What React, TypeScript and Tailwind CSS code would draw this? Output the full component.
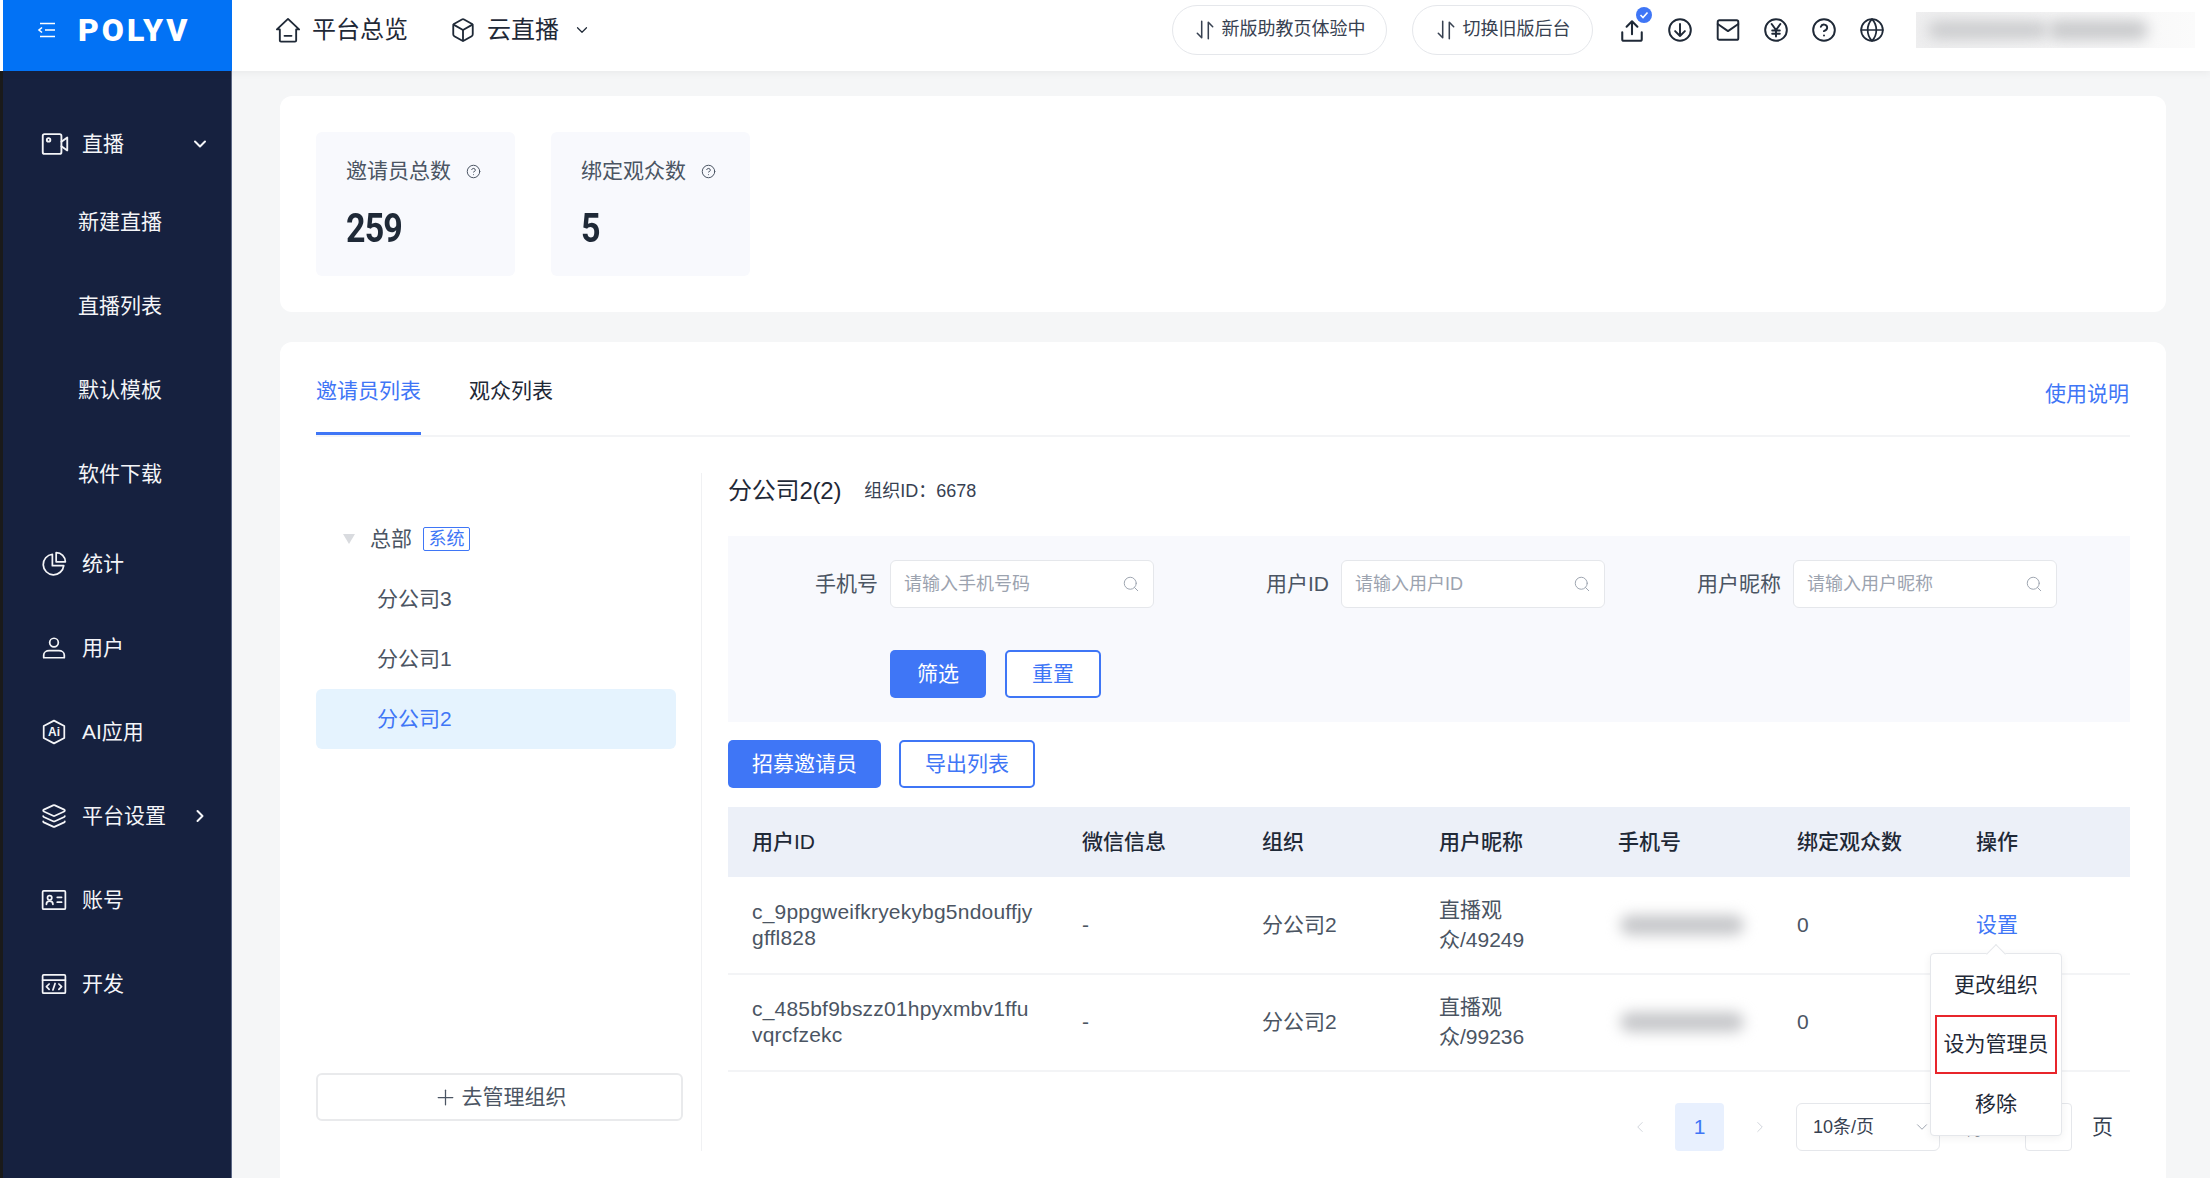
import { ChevronDown, ChevronLeft, ChevronRight, Search, Plus, Box, CircleHelp, Globe, Layers } from 'lucide-react'
import type { ReactNode } from 'react'

const Ic = ({ children, size = 26, sw = 1.6, className = '' }: { children: ReactNode; size?: number; sw?: number; className?: string }) => (
  <svg width={size} height={size} viewBox="0 0 24 24" fill="none" stroke="currentColor" strokeWidth={sw} strokeLinecap="round" strokeLinejoin="round" className={className}>
    {children}
  </svg>
)

const SwapIcon = () => (
  <svg width="22" height="22" viewBox="0 0 20 20" fill="none" stroke="currentColor" strokeWidth="1.4" strokeLinecap="round" strokeLinejoin="round">
    <path d="M7 2v15l-4-4" />
    <path d="M13 18V3l4 4" />
  </svg>
)

const menuIcons: Record<string, ReactNode> = {
  live: (
    <Ic size={28}>
      <rect x="1.5" y="3.5" width="16" height="17" rx="1.5" />
      <circle cx="6.5" cy="8.5" r="1.5" />
      <path d="M17.5 10l5-3.5v11l-5-3.5" />
    </Ic>
  ),
  stats: (
    <Ic>
      <path d="M10.5 3a9.5 9.5 0 1 0 10.5 10.5H10.5V3z" />
      <path d="M14 1.5a8.5 8.5 0 0 1 8.5 8.5H14V1.5z" />
    </Ic>
  ),
  user: (
    <Ic>
      <circle cx="12" cy="7" r="4" />
      <path d="M2.5 21v-2.5c0-2.5 2.5-4 5-4h9c2.500 0 5 1.500 5 4V21z" />
    </Ic>
  ),
  ai: (
    <Ic>
      <path d="M12 1.500l9.500 5v11l-9.500 5-9.500-5v-11z" />
      <text x="12" y="16" textAnchor="middle" fontSize="11" fontWeight="700" fill="currentColor" stroke="none" fontFamily="Liberation Sans">Ai</text>
    </Ic>
  ),
  account: (
    <Ic>
      <rect x="1.500" y="3.500" width="21" height="17" rx="1" />
      <circle cx="8" cy="10" r="2" />
      <path d="M5 16c0-2 1.500-3 3-3s3 1 3 3M15 9.500h4M15 14h4" />
    </Ic>
  ),
  dev: (
    <Ic>
      <rect x="1.500" y="3.500" width="21" height="17" rx="1" />
      <path d="M1.500 8.500h21M7.500 12l-2.500 2.500 2.500 2.500M16.500 12l2.500 2.500-2.500 2.500M13 11.500l-2 6" />
    </Ic>
  ),
}

const subItems = ['新建直播', '直播列表', '默认模板', '软件下载']

const rows = [
  { id: 'c_9ppgweifkryekybg5ndouffjygffl828', nick: '直播观众/49249' },
  { id: 'c_485bf9bszz01hpyxmbv1ffuvqrcfzekc', nick: '直播观众/99236' },
]

const grid = 'grid grid-cols-[330px_180px_177px_179px_179px_179px_178px]'

function MenuItem({ icon, label, arrow }: { icon: ReactNode; label: string; arrow?: ReactNode }) {
  return (
    <div className="flex h-[84px] items-center pl-[41px] pr-[21px] text-[21px] text-[#f4f5f8]">
      <span className="flex w-[41px] shrink-0">{icon}</span>
      <span className="flex-1">{label}</span>
      {arrow}
    </div>
  )
}

function Sidebar() {
  return (
    <aside className="w-[232px] shrink-0 border-l-[3px] border-l-[#1a1a1a] bg-[#16213f] border-r border-r-[#5c6885]">
      <div className="pt-[37px]">
        <div className="flex h-[72px] items-center pl-[38px] pr-[21px] text-[21px] text-[#f4f5f8]">
          <span className="flex w-[41px] shrink-0">{menuIcons.live}</span>
          <span className="flex-1">直播</span>
          <ChevronDown size={20} strokeWidth={2.4} />
        </div>
        {subItems.map((s) => (
          <div key={s} className="flex h-[84px] items-center pl-[75px] text-[21px] text-[#f4f5f8]">
            {s}
          </div>
        ))}
      </div>
      <div className="-ml-[3px] mt-[6px]">
        <MenuItem icon={menuIcons.stats} label="统计" />
        <MenuItem icon={menuIcons.user} label="用户" />
        <MenuItem icon={menuIcons.ai} label="AI应用" />
        <MenuItem icon={<Layers size={26} strokeWidth={1.6} />} label="平台设置" arrow={<ChevronRight size={20} strokeWidth={2.4} />} />
        <MenuItem icon={menuIcons.account} label="账号" />
        <MenuItem icon={menuIcons.dev} label="开发" />
      </div>
    </aside>
  )
}

function Header() {
  return (
    <header className="relative z-10 flex h-[71px] shrink-0 bg-white shadow-[0_2px_8px_rgba(0,0,0,0.05)]">
      <div className="ml-[3px] flex h-full w-[229px] items-center bg-[#0272f5] pb-[12px] pl-[34px] text-white">
        <svg width="18" height="16" viewBox="0 0 18 16" fill="none" stroke="currentColor" strokeWidth="1.6">
          <path d="M3 1.500h15M8 8h10M3 14.500h15M5 5.500L2 8l3 2.500" />
        </svg>
        <span className="ml-[23px] text-[32px] leading-none font-black tracking-[3px] font-['Roboto',sans-serif]">POLYV</span>
      </div>
      <div className="flex flex-1 items-center pb-[12px]">
        <div className="ml-[42px] flex items-center text-[24px] text-[#1f2937]">
          <Ic size={28} sw={1.6}>
            <path d="M12 2.500L2.500 11.500h2.500v9.500a1 1 0 0 0 1 1h12a1 1 0 0 0 1-1v-9.500h2.500z" />
            <path d="M9 17h6" />
          </Ic>
          <span className="ml-[10px]">平台总览</span>
          <Box size={26} strokeWidth={1.7} className="ml-[42px]" />
          <span className="ml-[11px]">云直播</span>
          <ChevronDown size={18} strokeWidth={1.6} className="ml-[14px]" />
        </div>
        <div className="ml-auto flex items-center">
          <div className="flex h-[50px] w-[215px] items-center justify-center gap-[6px] rounded-full border border-[#e5e7eb] text-[18px] text-[#374151]">
            <SwapIcon />
            新版助教页体验中
          </div>
          <div className="ml-[25px] flex h-[50px] w-[181px] items-center justify-center gap-[6px] rounded-full border border-[#e5e7eb] text-[18px] text-[#374151]">
            <SwapIcon />
            切换旧版后台
          </div>
          <div className="relative ml-[26px] flex w-[26px] justify-center text-[#1f2937]">
            <Ic size={28} sw={1.9}>
              <path d="M12 16V4M7 9l5-5 5 5" />
              <path d="M3 14v6.500a1.500 1.500 0 0 0 1.500 1.500h15a1.500 1.500 0 0 0 1.500-1.500V14" />
            </Ic>
            <span className="absolute -top-[9px] left-[17px] flex h-[16px] w-[16px] items-center justify-center rounded-full bg-[#3f76f6]">
              <svg width="10" height="10" viewBox="0 0 10 10" fill="none" stroke="#fff" strokeWidth="1.600">
                <path d="M1.500 5l2.500 2.500 4.500-5" />
              </svg>
            </span>
          </div>
          <Ic size={26} sw={1.800} className="ml-[22px] text-[#1f2937]">
            <circle cx="12" cy="12" r="10" />
            <path d="M12 6.500v11M7.500 13l4.500 4.500 4.500-4.500" />
          </Ic>
          <Ic size={26} sw={1.800} className="ml-[22px] text-[#1f2937]">
            <rect x="2.500" y="3" width="19" height="18" rx="1.500" />
            <path d="M2.500 6.500L12 13l9.500-6.500" />
          </Ic>
          <Ic size={26} sw={1.800} className="ml-[22px] text-[#1f2937]">
            <circle cx="12" cy="12" r="10" />
            <path d="M8 6.500l4 5.500 4-5.500M12 12v6M8.500 12.500h7M8.500 15.500h7" />
          </Ic>
          <CircleHelp size={26} strokeWidth={1.800} className="ml-[22px] text-[#1f2937]" />
          <Globe size={26} strokeWidth={1.600} className="ml-[22px] text-[#1f2937]" />
          <div className="ml-[31px] mr-[15px] flex h-[36px] w-[279px] items-center overflow-hidden bg-gradient-to-r from-[#eeeeef] to-[#fbfbfb] pl-[12px]">
            <div className="h-[18px] w-[120px] rounded-full bg-[#cbccce] blur-[7px]" />
            <div className="h-[20px] w-[100px] rounded-full bg-[#c9cacc] blur-[7px]" />
          </div>
        </div>
      </div>
    </header>
  )
}

function Stat({ label, value }: { label: string; value: string }) {
  return (
    <div className="h-[144px] w-[199px] rounded-[6px] bg-[#f8f9fd] pl-[30px] pt-[24px]">
      <div className="flex h-[30px] items-center text-[21px] text-[#4b5563]">
        {label}
        <CircleHelp size={15} strokeWidth={1.600} className="ml-[15px]" />
      </div>
      <div className="mt-[19px] origin-left scale-x-[0.85] text-[40px] leading-[48px] font-bold tracking-[-1px] text-[#1f2937] font-['Roboto',sans-serif]">{value}</div>
    </div>
  )
}

function Field({ label, placeholder, width }: { label: string; placeholder: string; width: string }) {
  return (
    <div className={`flex items-center justify-end gap-[12px] ${width}`}>
      <span className="text-[21px] text-[#4b5563]">{label}</span>
      <div className="flex h-[48px] w-[264px] items-center justify-between rounded-[6px] border border-[#e5e7eb] bg-white pl-[13px] pr-[13px]">
        <span className="text-[18px] text-[#9ca3af]">{placeholder}</span>
        <Search size={18} strokeWidth={1.300} className="text-[#9ca3af]" />
      </div>
    </div>
  )
}

function Popover() {
  return (
    <div className="absolute left-[-22px] top-[41px] z-20 w-[132px] rounded-[4px] border border-[#e5e7eb] bg-white py-[1px] text-center text-[21px] text-[#1f2937] shadow-[0_2px_8px_rgba(0,0,0,0.06)]">
      <span className="absolute -top-[7px] left-[58px] h-[14px] w-[14px] rotate-45 border-l border-t border-[#e5e7eb] bg-white" />
      <div className="flex h-[60px] items-center justify-center">更改组织</div>
      <div className="mx-[4px] flex h-[59px] items-center justify-center border-2 border-[#e8252b]">设为管理员</div>
      <div className="flex h-[60px] items-center justify-center">移除</div>
    </div>
  )
}

function MemberTable() {
  return (
    <div>
      <div className={`${grid} h-[70px] items-center bg-[#ecf0f8] text-[21px] font-medium text-[#1f2937]`}>
        {['用户ID', '微信信息', '组织', '用户昵称', '手机号', '绑定观众数', '操作'].map((h) => (
          <div key={h} className="pl-[24px]">{h}</div>
        ))}
      </div>
      {rows.map((r, i) => (
        <div key={r.id} className={`${grid} h-[97.500px] items-center border-b-2 border-[#f3f4f6] text-[21px] leading-[26px] text-[#4b5563]`}>
          <div className="break-all px-[24px] tracking-[0.2px]">{r.id}</div>
          <div className="pl-[24px]">-</div>
          <div className="pl-[24px]">分公司2</div>
          <div className="px-[24px] leading-[30px]">{r.nick}</div>
          <div className="pl-[26px]">
            <div className="h-[20px] w-[124px] rounded-full bg-[#c6c7ca] blur-[7px]" />
          </div>
          <div className="pl-[24px]">0</div>
          <div className="relative pl-[24px] text-[#3f76f6]">
            {i === 0 && (
              <>
                设置
                <Popover />
              </>
            )}
          </div>
        </div>
      ))}
      <div className="mt-[31px] flex h-[48px] items-center justify-end pr-[17px] text-[21px] text-[#374151]">
        <ChevronLeft size={18} strokeWidth={1.300} className="text-[#d1d5db]" />
        <div className="ml-[26px] flex h-[48px] w-[49px] items-center justify-center rounded-[4px] bg-[#e8f0fe] text-[#3f76f6]">1</div>
        <ChevronRight size={18} strokeWidth={1.300} className="ml-[27px] text-[#d1d5db]" />
        <div className="ml-[27px] flex h-[48px] w-[144px] items-center justify-between rounded-[6px] border border-[#e5e7eb] pl-[16px] pr-[8px] text-[18px]">
          10条/页
          <ChevronDown size={18} strokeWidth={1.300} className="text-[#9ca3af]" />
        </div>
        <span className="ml-[20px] text-[21px]">跳至</span>
        <div className="ml-[23px] h-[48px] w-[47px] rounded-[4px] border border-[#e5e7eb]" />
        <span className="ml-[20px]">页</span>
      </div>
    </div>
  )
}

export default function App() {
  return (
    <div className="flex h-[1178px] w-[2210px] flex-col overflow-hidden bg-[#f5f6f7] font-['Liberation_Sans','Noto_Sans_CJK_SC',sans-serif]">
      <Header />
      <div className="flex min-h-0 flex-1">
        <Sidebar />
        <main className="min-w-0 flex-1 pl-[48px] pr-[44px] pt-[25px]">
          <section className="flex h-[216px] gap-[36px] rounded-[12px] bg-white pl-[36px] pt-[36px]">
            <Stat label="邀请员总数" value="259" />
            <Stat label="绑定观众数" value="5" />
          </section>
          <section className="mt-[30px] h-[900px] rounded-[12px] bg-white px-[36px]">
            <div className="flex h-[95px] items-start justify-between border-b-2 border-[#f3f4f6] pt-[33px] text-[21px]">
              <div className="flex">
                <div className="h-[60px] border-b-[3px] border-[#3f76f6] text-[#3f76f6]">邀请员列表</div>
                <div className="ml-[48px] text-[#1f2937]">观众列表</div>
              </div>
              <div className="mr-[1px] mt-[3px] text-[#3f76f6]">使用说明</div>
            </div>
            <div className="mt-[36px] flex h-[678px]">
              <div className="flex w-[386px] shrink-0 flex-col border-r border-[#f0f1f3] pt-[36px]">
                <div className="flex h-[60px] items-center pl-[27px] text-[21px] text-[#4b5563]">
                  <span className="h-0 w-0 border-x-[6px] border-t-[10px] border-x-transparent border-t-[#d9dbdf]" />
                  <span className="ml-[15px]">总部</span>
                  <span className="ml-[11px] flex h-[24px] w-[47px] items-center justify-center rounded-[2px] border border-[#3f76f6] text-[18px] text-[#3f76f6]">系统</span>
                </div>
                <div className="flex h-[60px] items-center pl-[61px] text-[21px] text-[#4b5563]">分公司3</div>
                <div className="flex h-[60px] items-center pl-[61px] text-[21px] text-[#4b5563]">分公司1</div>
                <div className="flex h-[60px] w-[360px] items-center rounded-[6px] bg-[#e5f3fe] pl-[61px] text-[21px] text-[#3f76f6]">分公司2</div>
                <div className="mb-[30px] mt-auto flex h-[48px] w-[367px] items-center justify-center gap-[4px] rounded-[6px] border-2 border-[#e9eaec] text-[21px] text-[#4b5563]">
                  <Plus size={25} strokeWidth={1.200} />
                  去管理组织
                </div>
              </div>
              <div className="min-w-0 flex-1 pl-[26px]">
                <div className="mt-[3px] flex h-[30px] items-center">
                  <span className="text-[24px] tracking-[-0.2px] text-[#1f2937]">分公司2(2)</span>
                  <span className="ml-[23px] text-[18px] text-[#374151]">组织ID：6678</span>
                </div>
                <div className="mt-[30px] h-[186px] w-[1402px] bg-[#f8f9fd] pt-[24px]">
                  <div className="flex">
                    <Field label="手机号" placeholder="请输入手机号码" width="w-[426px]" />
                    <Field label="用户ID" placeholder="请输入用户ID" width="w-[451px]" />
                    <Field label="用户昵称" placeholder="请输入用户昵称" width="w-[452px]" />
                  </div>
                  <div className="ml-[162px] mt-[42px] flex gap-[19px]">
                    <div className="flex h-[48px] w-[96px] items-center justify-center rounded-[5px] bg-[#3f76f6] text-[21px] text-white">筛选</div>
                    <div className="flex h-[48px] w-[96px] items-center justify-center rounded-[5px] border-2 border-[#3f76f6] bg-white text-[21px] text-[#3f76f6]">重置</div>
                  </div>
                </div>
                <div className="mt-[18px] flex gap-[18px]">
                  <div className="flex h-[48px] w-[153px] items-center justify-center rounded-[5px] bg-[#3f76f6] text-[21px] text-white">招募邀请员</div>
                  <div className="flex h-[48px] w-[136px] items-center justify-center rounded-[5px] border-2 border-[#3f76f6] bg-white text-[21px] text-[#3f76f6]">导出列表</div>
                </div>
                <div className="mt-[19px] w-[1402px]">
                  <MemberTable />
                </div>
              </div>
            </div>
          </section>
        </main>
      </div>
    </div>
  )
}
